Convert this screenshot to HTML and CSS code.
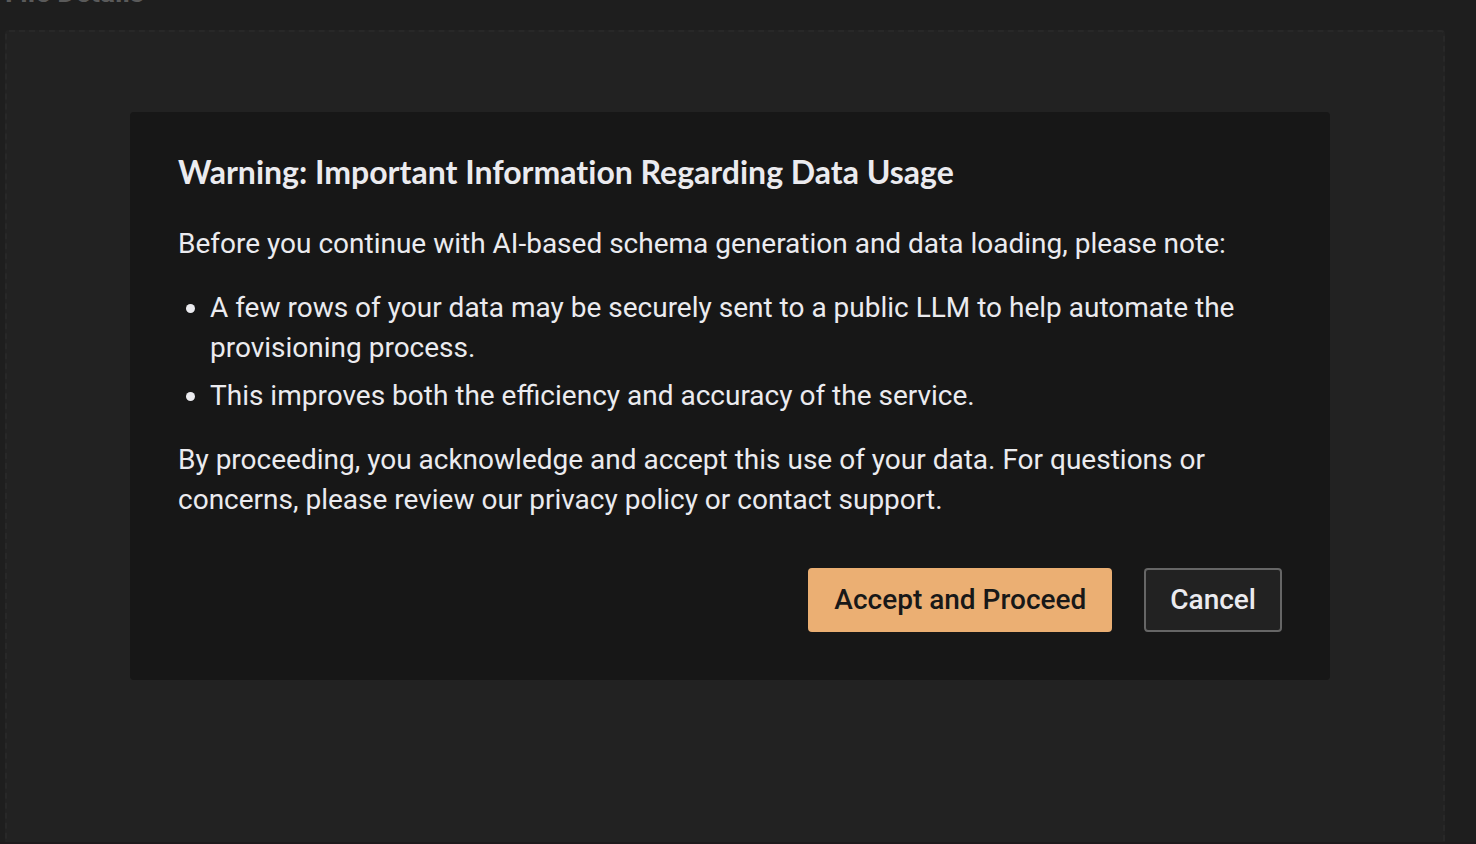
FILE: index.html
```html
<!DOCTYPE html>
<html lang="en">
<head>
    <meta charset="UTF-8">
    <meta name="viewport" content="width=device-width, initial-scale=1.0">
    <title>File Details</title>
    <link rel="stylesheet" href="styles.css">
</head>
<body>
    <div class="page">
        <h1 class="page-title">File Details</h1>
        <div class="dropzone"></div>
    </div>

    <!-- Data usage warning -->
    <div class="overlay">
        <div class="modal" role="dialog" aria-modal="true" aria-labelledby="modalTitle">
            <h2 class="modal-title" id="modalTitle">Warning: Important Information Regarding Data Usage</h2>
            <div class="modal-body">
                <p>Before you continue with AI-based schema generation and data loading, please note:</p>
                <ul>
                    <li>A few rows of your data may be securely sent to a public LLM to help automate the provisioning process.</li>
                    <li>This improves both the efficiency and accuracy of the service.</li>
                </ul>
                <p>By proceeding, you acknowledge and accept this use of your data. For questions or concerns, please review our privacy policy or contact support.</p>
            </div>
            <div class="modal-actions">
                <button type="button" class="btn btn-primary">Accept and Proceed</button>
                <button type="button" class="btn btn-secondary">Cancel</button>
            </div>
        </div>
    </div>
</body>
</html>
```
FILE: styles.css
```css
* {
    box-sizing: border-box;
}

body {
    margin: 0;
    background: #1e1e1e;
    color: #ebebef;
    font-family: Roboto, "Liberation Sans", sans-serif;
    font-size: 28px;
    line-height: 40px;
    overflow: hidden;
}

.page {
    display: flex;
    flex-direction: column;
    height: 100vh;
    padding: 0 31px 0 5px;
    border-bottom: 2px solid #1e1a1c;
}

.page-title {
    margin: -27px 0 17px;
    font-size: 28px;
    font-weight: 700;
    line-height: 40px;
    color: #5a5a5a;
}

.dropzone {
    flex: 1;
    background: #222222;
    border: 2px dashed #282828;
    border-bottom: none;
    border-radius: 4px 4px 0 0;
}

.overlay {
    position: fixed;
    inset: 0;
    display: flex;
    justify-content: center;
    align-items: flex-start;
    padding: 112px 16px 0 0;
}

.modal {
    width: 100%;
    max-width: 1200px;
    padding: 40px 48px 48px;
    background: #171717;
    border-radius: 4px;
}

.modal-title {
    margin: 0 0 32px;
    font-family: Lato, "Open Sans", sans-serif;
    font-size: 32px;
    font-weight: 700;
    line-height: 40px;
    font-variant-ligatures: none;
}

.modal-body p {
    margin: 0;
}

.modal-body ul {
    display: flex;
    flex-direction: column;
    gap: 8px;
    margin: 24px 0;
    padding-left: 32px;
}

.modal-actions {
    display: flex;
    justify-content: flex-end;
    gap: 32px;
    margin-top: 48px;
}

.btn {
    height: 64px;
    padding: 0 24px 2px;
    border: 2px solid transparent;
    border-radius: 4px;
    font-family: inherit;
    font-size: 28px;
    font-weight: 500;
    cursor: pointer;
}

.btn-primary {
    background: #ebaf73;
    border-color: #ebaf73;
    color: #181818;
}

.btn-secondary {
    background: #222222;
    border-color: #666666;
    color: #ebebef;
}
```
